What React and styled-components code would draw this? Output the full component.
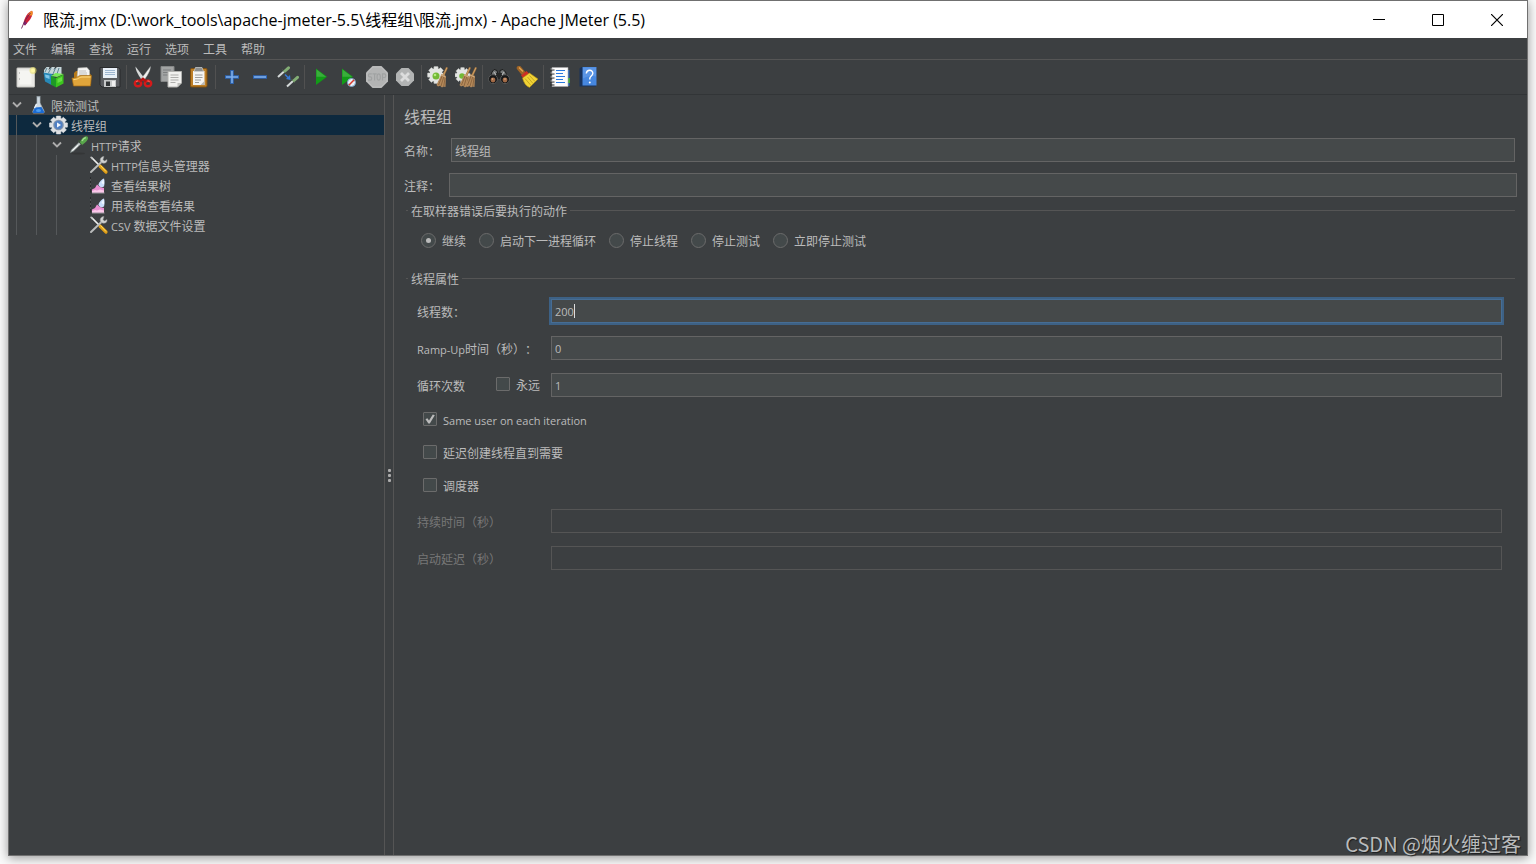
import React, { useEffect, useRef } from "react";
import styled, { createGlobalStyle, css } from "styled-components";

const UI_FONT = `"Noto Sans CJK SC", "Noto Sans", sans-serif`;
const LATIN_FONT = `"Open Sans", "Noto Sans CJK SC", sans-serif`;

const GlobalStyle = createGlobalStyle`
  *, *::before, *::after { box-sizing: border-box; }
  body {
    margin: 0;
    background: #fafafa;
    font-family: ${UI_FONT};
    font-size: 12px;
    color: #bbbbbb;
    text-spacing-trim: space-all;
  }
  button, input { font: inherit; color: inherit; }
  svg { display: block; }
`;

const Desktop = styled.div`
  min-height: 100vh;
  padding: 0 8px 8px;
  display: flex;
`;

const Window = styled.div`
  position: relative;
  flex: 1;
  min-width: 0;
  display: flex;
  flex-direction: column;
  background: #3c3f41;
  border: 1px solid #707070;
  box-shadow: 0 2px 10px rgba(0, 0, 0, 0.4);
`;

const TitleBar = styled.header`
  height: 37px;
  padding: 0 1px 0 10px;
  display: flex;
  align-items: center;
  background: #ffffff;
  color: #000000;
`;

const Title = styled.h1`
  flex: 1;
  margin: 0 0 0 8px;
  font-family: ${LATIN_FONT};
  font-size: 16px;
  font-weight: 400;
  line-height: 24px;
  white-space: nowrap;
`;

const WindowButton = styled.button`
  width: 59px;
  height: 37px;
  padding: 0;
  border: 0;
  background: transparent;
  display: grid;
  place-items: center;
`;

const MenuBar = styled.nav`
  height: 22px;
  padding-left: 4px;
  display: flex;
  align-items: center;
  gap: 14px;
  border-bottom: 1px solid #555555;
`;

const MenuButton = styled.button`
  padding: 0;
  border: 0;
  background: transparent;
  line-height: 20px;
`;

const ToolBar = styled.div`
  height: 35px;
  padding-left: 3px;
  display: flex;
  align-items: center;
  border-bottom: 1px solid #323537;
`;

const ToolButton = styled.button`
  width: 28px;
  height: 28px;
  padding: 0;
  border: 0;
  background: transparent;
  display: grid;
  place-items: center;
`;

const ToolSeparator = styled.span`
  width: 1px;
  height: 24px;
  margin: 0 2px;
  background: #515151;
`;

const Body = styled.div`
  flex: 1;
  display: flex;
`;

const TreePane = styled.aside`
  flex: 0 0 376px;
  border-right: 1px solid #555555;
`;

const Tree = styled.ul`
  margin: 0;
  padding: 0;
  list-style: none;
`;

const TreeRow = styled.li`
  height: 20px;
  display: flex;
  align-items: center;
  line-height: 20px;
  white-space: nowrap;
  background: ${(p) => (p.$selected ? "#0d293e" : "transparent")};
`;

const NodeText = styled.span`
  padding-top: 2px;
`;

const Latin = styled.span`
  font-family: ${LATIN_FONT};
  font-size: 11px;
  line-height: 1;
`;

const Guide = styled.span`
  width: 13px;
  height: 20px;
  margin-left: 7px;
  border-left: 1px solid #55585a;
`;

const ChevronCell = styled.span`
  width: 20px;
  height: 20px;
  padding: 5px 0 0 3px;
  display: block;
`;

const NodeIcon = styled.span`
  width: 20px;
  height: 20px;
  margin-right: 2px;
  display: grid;
  place-items: center;
`;

const Splitter = styled.div`
  flex: 0 0 9px;
  border-right: 1px solid #555555;
  display: flex;
  flex-direction: column;
  align-items: center;
  justify-content: center;
  gap: 2px;
`;

const GripDot = styled.span`
  width: 3px;
  height: 3px;
  border-radius: 1px;
  background: #adadad;
`;

const EditorPane = styled.main`
  flex: 1;
  min-width: 0;
  padding: 9px 0 0 10px;
`;

const PaneTitle = styled.h2`
  margin: 0 0 10px;
  font-size: 16px;
  font-weight: 400;
  line-height: 24px;
`;

const NameRow = styled.div`
  display: grid;
  grid-template-columns: ${(p) => (p.$wide ? "45px 1fr" : "47px 1fr")};
  padding-right: ${(p) => (p.$wide ? "10px" : "12px")};
  margin-bottom: ${(p) => (p.$wide ? "6px" : "11px")};
`;

const Label = styled.label`
  padding-top: 2px;
  line-height: 22px;
  white-space: nowrap;
  color: ${(p) => (p.$dim ? "#777777" : "#bbbbbb")};
`;

const TextField = styled.input`
  width: 100%;
  min-width: 0;
  height: 24px;
  padding: 0 3px;
  border: 1px solid #646464;
  border-radius: 0;
  outline: 0;
  background: #45494a;
  caret-color: transparent;
  ${(p) => p.$numeric && css`
    font-family: ${LATIN_FONT};
    font-size: 11px;
  `}

  &:disabled {
    border-color: #555555;
    background: #3c3f41;
  }
  &:focus {
    border-color: #466d94;
    box-shadow: 0 0 0 2px #3d6185;
  }
`;

const FieldWrap = styled.div`
  position: relative;
`;

const Caret = styled.span`
  position: absolute;
  left: 23px;
  top: 5px;
  width: 1px;
  height: 14px;
  background: #dddddd;
`;

const Group = styled.fieldset`
  min-width: 0;
  margin: 0 12px 0 2px;
  padding: 0;
  border: 0;
  border-top: 1px solid #555555;
`;

const GroupTitle = styled.legend`
  margin-left: 2px;
  padding: 0 3px;
  line-height: 15px;
`;

const RadioRow = styled.div`
  display: flex;
  gap: 13px;
  padding: 15px 15px 22px;
`;

const Choice = styled.label`
  min-height: ${(p) => (p.$tall ? "20px" : "16px")};
  display: flex;
  align-items: center;
  gap: 6px;
  line-height: 16px;
  white-space: nowrap;
`;

const mark = css`
  appearance: none;
  flex: none;
  border: 1px solid #6b6b6b;
  background: #43494a;
  display: grid;
  place-items: center;
`;

const Radio = styled.input`
  ${mark}
  width: 15px;
  height: 15px;
  margin: 0 0 1px;
  border-radius: 50%;

  &:checked::before {
    content: "";
    width: 5px;
    height: 5px;
    border-radius: 50%;
    background: #bbbbbb;
  }
`;

const Check = styled.input`
  ${mark}
  width: 14px;
  height: 14px;
  margin: 0 0 2px;
  border-radius: 1px;

  &:checked::before {
    content: "";
    width: 10px;
    height: 10px;
    background: #bbbbbb;
    clip-path: polygon(5% 52%, 24% 42%, 40% 64%, 78% 4%, 98% 12%, 48% 96%, 34% 96%);
  }
`;

const Properties = styled.div`
  display: flex;
  flex-direction: column;
  gap: 13px;
  padding: 13px 13px 0 11px;
`;

const PropertyRow = styled.div`
  display: grid;
  grid-template-columns: 134px 1fr;
`;

const LoopCell = styled.div`
  display: flex;
  align-items: center;
  justify-content: space-between;
  padding-right: 11px;
`;

const CheckLine = styled.div`
  display: flex;
  padding-left: 6px;
`;

const Watermark = styled.div`
  position: absolute;
  right: 6px;
  bottom: -3px;
  font-size: 20px;
  line-height: 28px;
  color: #b9bbbc;
  text-shadow: 1px 1px 1px #1c1d1e;
  pointer-events: none;
`;

const Svg = ({ size = 22, children }) => (
  <svg width={size} height={size} viewBox={`0 0 ${size} ${size}`} fill="none" aria-hidden="true">
    {children}
  </svg>
);

const Gear = ({ cx, cy, r, fill, stroke }) => (
  <g transform={`translate(${cx} ${cy})`}>
    {[0, 45, 90, 135].map((a) => (
      <rect key={a} x={-r * 0.25} y={-r} width={r * 0.5} height={r * 2} rx="0.5" fill={fill} stroke={stroke} strokeWidth="0.5" transform={`rotate(${a})`} />
    ))}
    <circle r={r * 0.78} fill={fill} />
  </g>
);

const Broom = ({ x = 0 }) => (
  <g transform={`translate(${x} 0)`}>
    <path d="M20 1.5 16.5 9" stroke="#a4733c" strokeWidth="2" />
    <path d="m20 1.5-3.500 7.500" stroke="#e0b479" strokeWidth="0.700" />
    <path d="m14.500 8 4.500 2-.5 11-2-.6-1.500 1-2-1.600-2 .6-1.500-1.500z" fill="#b58a5b" />
    <path d="m15.500 9-4 10M17 10l-3 10M18.300 10.500l-1.500 9.500" stroke="#7c5834" strokeWidth="0.700" />
    <path d="m14 9 4.800 2.200" stroke="#d7b184" strokeWidth="1" />
  </g>
);

const Dropper = () => (
  <>
    <ellipse cx="9" cy="18.500" rx="7" ry="1" fill="#2b2d2e" opacity=".5" />
    <path d="m1.500 17.500.8-2.500L10 7.500l1.800 1.500-7.300 7z" fill="#cfd6d6" stroke="#85908f" strokeWidth="0.600" />
    <path d="m3.500 15.500 5.500-5.200" stroke="#fff" />
    <path d="m9.500 5.500 4.500 4.500" stroke="#3f523f" strokeWidth="1.800" />
    <path d="M11 7.500c1-3.200 3.500-5.900 6-6.200 2.200-.1 2.500 2.100 1.500 3.500-1 2-3.300 3.700-5.300 4.900z" fill="#58a64a" />
    <path d="M13 6c1-2 2.200-3 3.800-3.500" stroke="#a5dc92" strokeWidth="1.400" />
  </>
);

const icons = {
  new: (
    <>
      <rect x="2" y="2" width="17.500" height="19" rx="0.500" fill="#e9e9e6" stroke="#c6c6c2" />
      <path d="M4.500 4.500h12v14h-12z" fill="#f5f5f2" />
      <path d="M4 7h1M4 13h1" stroke="#999" />
      <circle cx="18" cy="4.500" r="3.500" fill="#eee46c" opacity=".6" />
      <circle cx="18" cy="4.500" r="2" fill="#fff9a8" />
    </>
  ),
  templates: (
    <>
      <path d="m1 4 2.500-3h3L5.500 4 9 1h3L10.500 4 14 1h4.500v7H10L1 8z" fill="#c6d6da" />
      <path d="m4 2-2 4m6-4-2.500 5m7-5-2.500 6m6-6-2 6" stroke="#5f8594" />
      <path d="m.500 6.500 9 1.500v11.500L2 15.500z" fill="#2788b7" />
      <path d="m2 8.500 4.500 1V13L2.500 11.500z" fill="#7fc5e7" />
      <path d="m8 10 4.500-3 8.500 1-7 3z" fill="#7ae85a" />
      <path d="m8 10 5 2v9.500L8 18.500z" fill="#1e9a26" />
      <path d="m13 12 7.500-3.500v9L13 21.500z" fill="#3cc51e" />
      <path d="m14.500 13 4.500-2v4l-4.500 2z" fill="#66df43" />
    </>
  ),
  open: (
    <>
      <path d="M3 9V7l2-2h3l1 1h9l2 3v9H3z" fill="#b77a18" />
      <path d="m7 2 9-.5 2.500 3V12H6z" fill="#f4f4f2" stroke="#b7b7b3" strokeWidth=".6" />
      <path d="M8 5h7M8 7h8M8 9h8" stroke="#aaa" strokeWidth=".7" />
      <path d="M1 12c5 .5 6-2.500 9-2.500h10.500L19.500 20h-17z" fill="#e0a53b" stroke="#a66c12" strokeWidth=".7" />
      <path d="M2.500 13.500c5 .2 5.500-2.500 8.500-2.500h8.500" stroke="#ffdc82" />
    </>
  ),
  save: (
    <>
      <path d="M1 1.500h18.500l1.500 2V21H3l-2-2z" fill="#5c5e62" stroke="#292b2d" />
      <path d="M4 2h14v10H4z" fill="#e9f0f8" />
      <path d="M6 4.500h10M6 6.500h10M6 8.500h10" stroke="#8ca8c7" strokeWidth=".8" />
      <path d="M5 14h12v7H5z" fill="#c7c9ca" />
      <path d="M7 15.500h4V20H7z" fill="#333638" />
      <path d="M13 15h3v5h-3z" fill="#f0f0f0" />
    </>
  ),
  cut: (
    <>
      <path d="m3.500 .5 9.500 12.500-2.500 2C7 10 3.500 5 3.500.5z" fill="#d8dada" />
      <path d="M18.500.5 9 13l2.500 2C15 10 18.500 5 18.500.5z" fill="#f0f0ef" stroke="#989a9a" strokeWidth=".4" />
      <ellipse cx="6" cy="17.500" rx="3.200" ry="2.800" stroke="#d61a1a" strokeWidth="2.400" />
      <ellipse cx="16" cy="17.500" rx="3.200" ry="2.800" stroke="#d61a1a" strokeWidth="2.400" />
      <path d="m8 15.500 3-2.500 3 2.500" stroke="#b51212" strokeWidth="2.800" />
      <path d="M4 16c.5-1 1.500-1 2-1M15.500 15c1 0 1.700 0 2 1" stroke="#ff7d6b" />
    </>
  ),
  copy: (
    <>
      <path d="M1 .5h13v15H1z" fill="#a2a4a4" stroke="#858787" />
      <path d="M3 4h8M3 6.500h8M3 9h5" stroke="#7d7f80" />
      <path d="M8 5.500h13.500V17l-4 4H8z" fill="#f1f1ef" stroke="#b3b3b0" />
      <path d="M21.500 17h-4v4z" fill="#bebebb" />
      <path d="M10.500 9h8M10.500 11.500h8M10.500 14h8M10.500 16.500h5" stroke="#a6a6a4" strokeWidth=".9" />
    </>
  ),
  paste: (
    <>
      <rect x="2.500" y="2.500" width="16.500" height="18.500" rx="1.200" fill="#bd7f27" stroke="#80500f" />
      <path d="M5 5h11.500v14H5z" fill="#f5f5f3" />
      <path d="M7.500 1.500H14l1.500 4H6z" fill="#8c8f8f" stroke="#d1d3d2" strokeWidth=".7" />
      <path d="M7 9h7.500M7 11.500h7.500M7 14h6M7 16.500h4" stroke="#9d9e9e" />
      <path d="m16.500 15-4 4h4z" fill="#b8b8b5" />
    </>
  ),
  plus: (
    <>
      <path d="M11 4v14M4 11h14" stroke="#2d65b3" strokeWidth="3.600" />
      <path d="M11 5v12M5 11h12" stroke="#7eaeea" strokeWidth="1.600" />
    </>
  ),
  minus: (
    <>
      <path d="M4 11h14" stroke="#2d65b3" strokeWidth="3.600" />
      <path d="M5 11h12" stroke="#7eaeea" strokeWidth="1.600" />
    </>
  ),
  toggle: (
    <>
      <path d="m1 11 6-5.500" stroke="#d5dada" strokeWidth="2" />
      <path d="m5.500 3.500 3.500 4" stroke="#4d624d" />
      <path d="m8 5 3.500-3.200" stroke="#83ad75" strokeWidth="3" strokeLinecap="round" />
      <path d="m10 20.500 6-5.500" stroke="#d5dada" strokeWidth="2" />
      <path d="m14.500 13 3.500 4" stroke="#4d624d" />
      <path d="m17 14.500 3.500-3.200" stroke="#83ad75" strokeWidth="3" strokeLinecap="round" />
      <path d="m8 8.500 3.500 3.500" stroke="#3778d4" strokeWidth="1.500" />
      <path d="m13.500 14-.5-5-4 4z" fill="#3778d4" />
    </>
  ),
  start: (
    <>
      <path d="M6 2.500V19l11-8.200z" fill="#129b17" />
      <path d="M6.500 3.500v7.300h9.500z" fill="#3aae3c" />
    </>
  ),
  startNoPause: (
    <>
      <path d="M4 2.500V19l11-8.200z" fill="#129b17" />
      <path d="M4.500 3.500v7.300h9.500z" fill="#3aae3c" />
      <circle cx="13.500" cy="16.500" r="4" fill="#e7eef5" stroke="#7aa2c8" />
      <path d="m10.800 19.200 5.400-5.400" stroke="#d8392c" strokeWidth="1.500" />
    </>
  ),
  stop: (
    <>
      <path d="M6.500 0h9L22 6.500v9L15.500 22h-9L0 15.500v-9z" fill="#b3b4b4" />
      <path d="M7 1h8l6 6v8l-6 6H7l-6-6V7z" stroke="#bebfbf" />
      <path d="M5.800 7.800H3.500c-1.500 0-1.500 3 0 3h1c1.600 0 1.600 3.400 0 3.400H2M6.500 7.800h4.200M8.600 7.800v6.700M12.700 7.800c2.200 0 2.200 6.400 0 6.400s-2.200-6.400 0-6.400M16.500 14.500V7.800h1.700c2.200 0 2.200 3.700 0 3.700h-1.500" stroke="#a0a2a2" strokeWidth="1.200" />
    </>
  ),
  shutdown: (
    <>
      <path d="M7.500 2h7L20 7.500v7L14.500 20h-7L2 14.500v-7z" fill="#b2b4b4" />
      <path d="m7 7 8 8m0-8-8 8" stroke="#dcdddd" strokeWidth="2.800" />
    </>
  ),
  clear: (
    <>
      <Gear cx={9} cy={9} r={8.500} fill="#e3e5e3" stroke="#b8bab9" />
      <circle cx="9" cy="10" r="3.500" fill="#73b936" />
      <circle cx="8" cy="9" r="1.300" fill="#b2ec7d" />
      <Broom />
    </>
  ),
  clearAll: (
    <>
      <Gear cx={7.500} cy={9} r={7.500} fill="#e3e5e3" stroke="#b8bab9" />
      <circle cx="7" cy="10" r="2.800" fill="#73b936" />
      <Broom x={-5} />
      <Broom x={1} />
    </>
  ),
  search: (
    <>
      <path d="m4 6 2-2.500 3 1 1 5H3zM12 4.500l3-1 2.500 2.500 1.500 4h-7z" fill="#777a7a" stroke="#1a1b1b" />
      <path d="M8 7h6v6H8z" fill="#252727" />
      <path d="m6 6 2 3m8-3-2 3" stroke="#b9bbbb" />
      <circle cx="5" cy="13.200" r="4.500" fill="#171819" stroke="#565757" />
      <circle cx="17" cy="13.200" r="4.500" fill="#171819" stroke="#565757" />
      <circle cx="5" cy="14" r="2.400" fill="#a36b47" />
      <circle cx="17" cy="14" r="2.400" fill="#a36b47" />
      <circle cx="4.500" cy="13" r=".8" fill="#dfb795" />
      <circle cx="17" cy="13" r=".8" fill="#dfb795" />
    </>
  ),
  searchReset: (
    <>
      <path d="m3 2 5 6" stroke="#9e6325" strokeWidth="4.500" strokeLinecap="round" />
      <path d="m3 1.500 4 4" stroke="#e0a657" strokeWidth="1.200" />
      <path d="m5 9.500 5.500-4.500 3 3-6 4.500z" fill="#cd2f24" />
      <path d="m6.500 12 7-5 8.500 6-8.500 8.500C9.500 20 7.500 16 6.500 12z" fill="#f1d335" stroke="#ad8a16" strokeWidth=".6" />
      <path d="m9 12.500 6 7M11.500 11l5.500 6.500M13.500 9.500l5.500 6" stroke="#b99a1c" strokeWidth=".8" />
    </>
  ),
  functions: (
    <>
      <path d="M16 4h4.500v16H16z" fill="#2563b8" />
      <path d="M17 12h4v5h-4z" fill="#45a837" />
      <path d="M3 1.500h16v19H3z" fill="#fcfcfc" stroke="#a9a9a9" strokeWidth=".6" />
      <path d="M7 4.500h9M7 7.500h7M7 10.500h9M7 13.500h7M7 16.500h9" stroke="#2879df" strokeWidth="1.200" />
      <path d="M1.500 4h4M1.500 8h4M1.500 12h4M1.500 16h4M1.500 19h4" stroke="#222" strokeWidth="1.200" />
      <path d="M1.500 3h3M1.500 7h3M1.500 11h3M1.500 15h3" stroke="#ddd" strokeWidth=".7" />
    </>
  ),
  help: (
    <>
      <path d="m2.500 2.500 2-1.500H19v19.500H2.500z" fill="#18325b" />
      <path d="M5.500 1h14v18.500h-14z" fill="#4687df" />
      <path d="M6 1.500h13v9c-5-2-9 0-13 2z" fill="#5a95e6" />
      <path d="M9.300 7.500c.4-4.500 6.900-4 6.500 0-.2 2.500-3 2.500-3 5v1" stroke="#fff" strokeWidth="1.400" />
      <circle cx="12.800" cy="16.500" r="1" fill="#fff" />
    </>
  ),
};

const nodeIcons = {
  plan: (
    <>
      <path d="M7.500 1.500h4M8 2v6l-4 8c-.5 1.500 0 2 1 2h9c1 0 1.500-.5 1-2L11 8V2z" fill="#cfd9e1" stroke="#a8b4bd" strokeWidth=".7" />
      <path d="m6 12.500 6.500-.5 2.500 4.500c.5 1.300 0 1.500-1 1.500H5c-1 0-1.300-.5-1-1.500z" fill="#1c6bd2" />
      <path d="m7.500 9-2 4" stroke="#eef6ff" strokeWidth="1.400" />
      <ellipse cx="9.500" cy="15.500" rx="2.500" ry="1.500" fill="#4a9cf0" />
    </>
  ),
  threads: (
    <>
      <Gear cx={9.500} cy={10} r={9} fill="#dfe1e4" stroke="#dfe1e4" />
      <circle cx="9.500" cy="10" r="5.300" fill="#7f93ad" />
      <circle cx="9.500" cy="10" r="4" fill="#4f7fc4" />
      <path d="m8 7.500 4 2.500-4 2.500z" fill="#f2f7ff" />
    </>
  ),
  sampler: <Dropper />,
  config: (
    <>
      <path d="m2 2 9 9" stroke="#edeeed" strokeWidth="1.700" />
      <path d="m1 1.500 3 1.500-1.500 1.500z" fill="#b1b3b4" />
      <path d="m11 11 6 6" stroke="#df9d16" strokeWidth="3.200" strokeLinecap="round" />
      <path d="m11.500 10.500 5.500 6" stroke="#ffe065" />
      <path d="M2 17 13 6.500" stroke="#b9bbbb" strokeWidth="2" strokeLinecap="round" />
      <path d="M15 1.500c-3 0-4.500 2.500-3.500 5l2 1.500c3 .8 5-1 4.500-3.500L15.500 6 14 4.500z" fill="#d2d4d3" stroke="#8c8f8f" strokeWidth=".5" />
    </>
  ),
  listener: (
    <>
      <path d="M1.500 2v15.500" stroke="#292b2c" />
      <path d="M1 5h1M1 9h1M1 13h1" stroke="#777" />
      <path d="M3 17.500v-3l3-1.500 2-3.500 3 2.500 4 1v4.500z" fill="#ea8fd2" />
      <path d="M3 17.500v-1.500l3-1 2 .5 3-1 4 1v2z" fill="#fbc9ea" />
      <path d="M9.500 9.500C10 7 13 4 15 3.500c1 3 .5 6 0 8-2.500 1.500-5 .5-5.500-2z" fill="#c9dcfa" />
      <path d="M12.500 8c.5-2 1.500-3 2.200-3.500l.3 5z" fill="#f1f7ff" />
      <path d="M3 18h12.500" stroke="#d9dadb" strokeWidth=".6" />
    </>
  ),
};

const menus = ["文件", "编辑", "查找", "运行", "选项", "工具", "帮助"];

const toolGroups = [
  [["new", "新建"], ["templates", "模板"], ["open", "打开"], ["save", "保存"]],
  [["cut", "剪切"], ["copy", "复制"], ["paste", "粘贴"]],
  [["plus", "展开"], ["minus", "收起"], ["toggle", "切换"]],
  [["start", "启动"], ["startNoPause", "不停顿启动"], ["stop", "停止"], ["shutdown", "关闭"]],
  [["clear", "清除"], ["clearAll", "清除全部"]],
  [["search", "查找"], ["searchReset", "重置查找"]],
  [["functions", "函数助手"], ["help", "帮助"]],
];

const nodes = [
  { depth: 0, icon: "plan", text: "限流测试", open: true },
  { depth: 1, icon: "threads", text: "线程组", open: true, selected: true },
  { depth: 2, icon: "sampler", latin: "HTTP", text: "请求", open: true },
  { depth: 3, icon: "config", latin: "HTTP", text: "信息头管理器" },
  { depth: 3, icon: "listener", text: "查看结果树" },
  { depth: 3, icon: "listener", text: "用表格查看结果" },
  { depth: 3, icon: "config", latin: "CSV ", text: "数据文件设置" },
];

const errorActions = ["继续", "启动下一进程循环", "停止线程", "停止测试", "立即停止测试"];

const Chevron = () => (
  <svg width="10" height="10" viewBox="0 0 10 10" fill="none" aria-hidden="true">
    <path d="m1 2.500 4 4 4-4" stroke="#adadad" strokeWidth="1.800" />
  </svg>
);

const Feather = () => (
  <svg width="16" height="20" viewBox="0 0 16 20" fill="none" aria-hidden="true">
    <path d="M13 .8c1.200 1.800.2 6-2.500 9.500L6 15.500 4.500 14C5 8 9 2 13 .8z" fill="#cb2138" />
    <path d="M13 .8c1.200 1.800.7 3.500 0 5L9 5C10 3 11.500 1.300 13 .8z" fill="#f28a25" />
    <path d="M6 15.500 4.500 14l.5-3 3 2z" fill="#7c2672" />
    <path d="M11.500 3C8 7 5 12 2.500 18.500" stroke="#6a2355" strokeWidth=".9" />
  </svg>
);

export default function App() {
  const threadsRef = useRef(null);

  useEffect(() => {
    const field = threadsRef.current;
    field.focus();
    field.setSelectionRange(field.value.length, field.value.length);
  }, []);

  return (
    <>
      <GlobalStyle />
      <Desktop>
        <Window>
          <TitleBar>
            <Feather />
            <Title>限流.jmx (D:\work_tools\apache-jmeter-5.5\线程组\限流.jmx) - Apache JMeter (5.5)</Title>
            <WindowButton aria-label="最小化">
              <svg width="12" height="12" viewBox="0 0 12 12"><path d="M0 5.500h12" stroke="#000" /></svg>
            </WindowButton>
            <WindowButton aria-label="最大化">
              <svg width="12" height="12" viewBox="0 0 12 12" fill="none"><path d="M.5.5h11v11H.5z" stroke="#000" /></svg>
            </WindowButton>
            <WindowButton aria-label="关闭">
              <svg width="12" height="12" viewBox="0 0 12 12"><path d="m0 0 12 12M12 0 0 12" stroke="#000" strokeWidth="1.200" /></svg>
            </WindowButton>
          </TitleBar>

          <MenuBar>
            {menus.map((m) => <MenuButton key={m}>{m}</MenuButton>)}
          </MenuBar>

          <ToolBar role="toolbar">
            {toolGroups.map((group, i) => (
              <React.Fragment key={group[0][0]}>
                {i > 0 && <ToolSeparator />}
                {group.map(([name, label]) => (
                  <ToolButton key={name} aria-label={label}>
                    <Svg>{icons[name]}</Svg>
                  </ToolButton>
                ))}
              </React.Fragment>
            ))}
          </ToolBar>

          <Body>
            <TreePane>
              <Tree role="tree">
                {nodes.map((n) => (
                  <TreeRow key={n.text} role="treeitem" aria-level={n.depth + 1} aria-selected={!!n.selected} $selected={n.selected}>
                    {Array.from({ length: n.depth }, (_, i) => <Guide key={i} />)}
                    <ChevronCell>{n.open && <Chevron />}</ChevronCell>
                    <NodeIcon><Svg size={20}>{nodeIcons[n.icon]}</Svg></NodeIcon>
                    <NodeText>{n.latin && <Latin>{n.latin}</Latin>}{n.text}</NodeText>
                  </TreeRow>
                ))}
              </Tree>
            </TreePane>

            <Splitter>
              <GripDot />
              <GripDot />
              <GripDot />
            </Splitter>

            <EditorPane>
              <PaneTitle>线程组</PaneTitle>
              <NameRow>
                <Label htmlFor="name">名称：</Label>
                <TextField id="name" defaultValue="线程组" />
              </NameRow>
              <NameRow $wide>
                <Label htmlFor="comments">注释：</Label>
                <TextField id="comments" />
              </NameRow>

              <Group>
                <GroupTitle>在取样器错误后要执行的动作</GroupTitle>
                <RadioRow>
                  {errorActions.map((a, i) => (
                    <Choice key={a}>
                      <Radio type="radio" name="onError" defaultChecked={i === 0} />
                      {a}
                    </Choice>
                  ))}
                </RadioRow>
              </Group>

              <Group>
                <GroupTitle>线程属性</GroupTitle>
                <Properties>
                  <PropertyRow>
                    <Label htmlFor="threads">线程数：</Label>
                    <FieldWrap>
                      <TextField id="threads" ref={threadsRef} defaultValue="200" $numeric />
                      <Caret />
                    </FieldWrap>
                  </PropertyRow>
                  <PropertyRow>
                    <Label htmlFor="ramp"><Latin>Ramp-Up</Latin>时间（秒）：</Label>
                    <TextField id="ramp" defaultValue="0" $numeric />
                  </PropertyRow>
                  <PropertyRow>
                    <LoopCell>
                      <Label htmlFor="loops">循环次数</Label>
                      <Choice><Check type="checkbox" />永远</Choice>
                    </LoopCell>
                    <TextField id="loops" defaultValue="1" $numeric />
                  </PropertyRow>
                  <CheckLine>
                    <Choice $tall><Check type="checkbox" defaultChecked /><Latin>Same user on each iteration</Latin></Choice>
                  </CheckLine>
                  <CheckLine>
                    <Choice $tall><Check type="checkbox" />延迟创建线程直到需要</Choice>
                  </CheckLine>
                  <CheckLine>
                    <Choice $tall><Check type="checkbox" />调度器</Choice>
                  </CheckLine>
                  <PropertyRow>
                    <Label htmlFor="duration" $dim>持续时间（秒）</Label>
                    <TextField id="duration" disabled />
                  </PropertyRow>
                  <PropertyRow>
                    <Label htmlFor="delay" $dim>启动延迟（秒）</Label>
                    <TextField id="delay" disabled />
                  </PropertyRow>
                </Properties>
              </Group>
            </EditorPane>
          </Body>
          <Watermark>CSDN @烟火缠过客</Watermark>
        </Window>
      </Desktop>
    </>
  );
}
